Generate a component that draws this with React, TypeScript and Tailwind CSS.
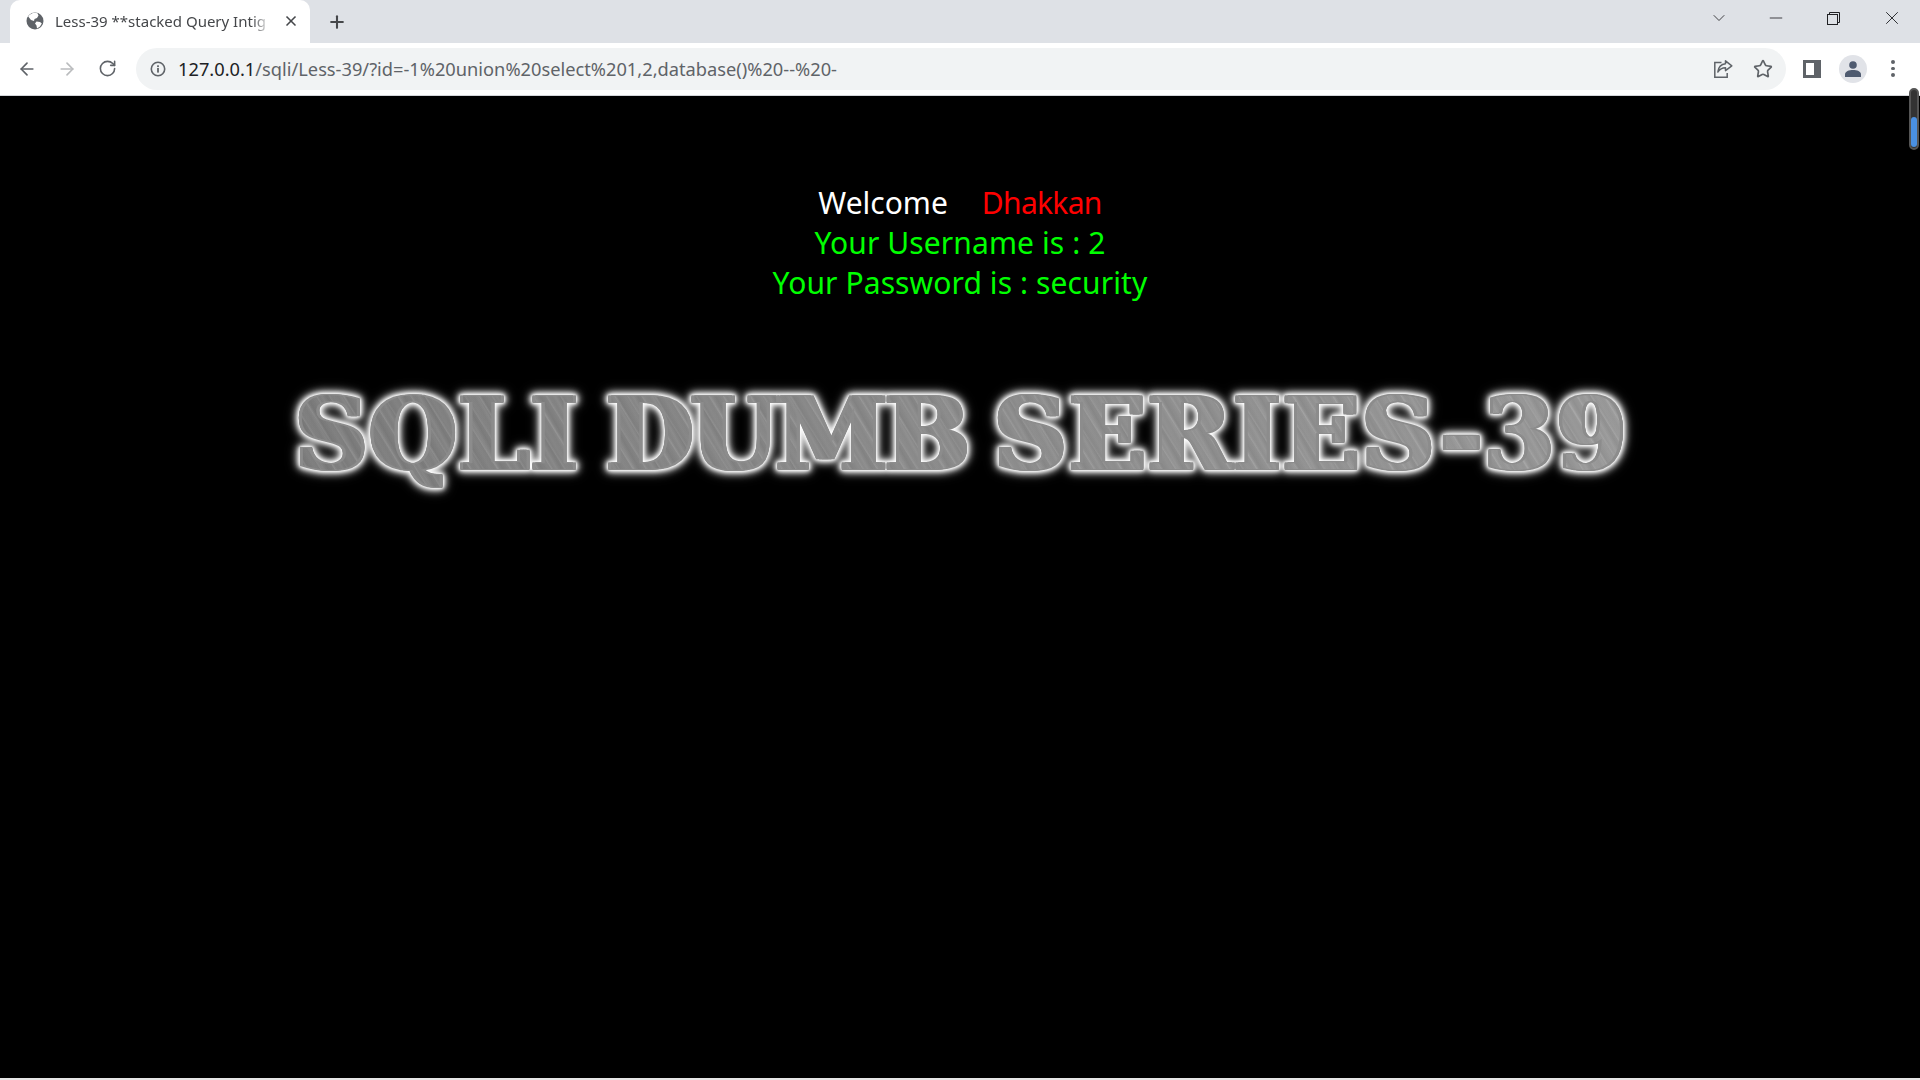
import { ArrowLeft, ArrowRight, RotateCw, Star, Plus, X, ChevronDown, Minus } from "lucide-react";

function Globe() {
  return (
    <svg width="18" height="18" viewBox="0 0 18 18" className="shrink-0">
      <circle cx="9" cy="9" r="8.5" fill="#5f6368" />
      <path d="M9 .8 C6 1 3.5 2.4 2.2 4.6 L5 8 L8 9 L8.5 7 L11 6 L12.5 3.5 L11.5 1.2Z" fill="#fff" />
      <path d="M10.5 9.5 L14 10 L15.8 11.5 L14 14.5 L11 16.4 L10.5 13.5 L9 11.5Z" fill="#fff" />
    </svg>
  );
}

function Info() {
  return (
    <svg width="16" height="16" viewBox="0 0 16 16" className="shrink-0">
      <circle cx="8" cy="8" r="6.7" fill="none" stroke="#5f6368" strokeWidth="1.6" />
      <rect x="7.1" y="7" width="1.8" height="4.6" fill="#5f6368" />
      <rect x="7.1" y="4.3" width="1.8" height="1.8" fill="#5f6368" />
    </svg>
  );
}

function Share() {
  return (
    <svg width="20" height="20" viewBox="0 0 20 20" fill="none" stroke="#5f6368" strokeWidth="1.5" className="shrink-0">
      <path d="M8.5 3.5H1.8V18.2H14.2V14" />
      <path d="M12.5 1.8 L18.8 6.8 L12.5 11.6 V8.8 C9 8.8 6.8 10 4.8 13 C5.4 8.6 8 5.2 12.5 4.8Z" strokeLinejoin="round" />
    </svg>
  );
}

function SidePanel() {
  return (
    <svg width="18" height="18" viewBox="0 0 18 18" className="shrink-0">
      <rect x="0" y="0" width="18" height="18" fill="#5f6368" />
      <rect x="3" y="3" width="8" height="12" fill="#fff" />
    </svg>
  );
}

function Avatar() {
  return (
    <div className="flex h-7 w-7 items-center justify-center rounded-full bg-[#e1e3e8]">
      <svg width="18" height="18" viewBox="0 0 18 18" className="shrink-0">
        <circle cx="9" cy="5" r="3.8" fill="#4f5b70" />
        <path d="M1 17 V14.4 C1 11.4 5 10 9 10 C13 10 17 11.4 17 14.4 V17Z" fill="#4f5b70" />
      </svg>
    </div>
  );
}

function Kebab() {
  return (
    <div className="flex flex-col gap-[3px]">
      <span className="h-[3.5px] w-[3.5px] rounded-full bg-[#5f6368]" />
      <span className="h-[3.5px] w-[3.5px] rounded-full bg-[#5f6368]" />
      <span className="h-[3.5px] w-[3.5px] rounded-full bg-[#5f6368]" />
    </div>
  );
}

function Restore() {
  return (
    <svg width="13" height="13" viewBox="0 0 13 13" fill="none" stroke="#202124" strokeWidth="1">
      <rect x="0.5" y="2.5" width="10" height="10" />
      <path d="M2.5 2.5V0.5H12.5V10.5H10.5" />
    </svg>
  );
}

export default function App() {
  return (
    <div className="relative flex h-screen w-full flex-col overflow-hidden bg-black font-['Noto_Sans',sans-serif]">
      <header className="flex h-[43px] shrink-0 items-end bg-[#dee1e6] pl-[10px]">
        <div className="flex h-[43px] w-[300px] items-center rounded-t-[10px] bg-white pb-[1px] pl-[16px]">
          <Globe />
          <span className="ml-[11px] w-[224px] shrink-0 whitespace-nowrap text-[15px] text-[#45474a] [mask-image:linear-gradient(90deg,#000_88%,transparent_96%)]">
            Less-39 **stacked Query Intig
          </span>
          <X size={16} strokeWidth={2.5} color="#45474a" className="ml-[4px] shrink-0" />
        </div>
        <Plus size={20} strokeWidth={2.5} color="#45474a" className="mb-[11px] ml-[17px] shrink-0" />
        <div className="mb-[14px] ml-auto flex items-center">
          <ChevronDown size={20} strokeWidth={1} color="#202124" />
          <Minus size={20} strokeWidth={1} color="#202124" className="ml-[37px]" />
          <span className="ml-[41px]"><Restore /></span>
          <X size={22} strokeWidth={1} color="#202124" className="ml-[41px] mr-[17px]" />
        </div>
      </header>

      <nav className="flex h-[53px] shrink-0 items-center border-b border-[#d4d6da] bg-white pl-[17px] pb-[1px]">
        <ArrowLeft size={20} strokeWidth={2} color="#5f6368" className="shrink-0" />
        <ArrowRight size={20} strokeWidth={2} color="#babcbe" className="ml-[20px] shrink-0" />
        <RotateCw size={19} strokeWidth={2} color="#5f6368" className="ml-[21px] shrink-0" />
        <div className="ml-[19px] flex h-[42px] w-[1650px] shrink-0 items-center rounded-full bg-[#f1f3f4] pl-[14px] pr-[13px]">
          <Info />
          <span className="ml-[12px] whitespace-nowrap text-[18.25px] text-[#5f6368]">
            <span className="text-[#202124]">127.0.0.1</span>/sqli/Less-39/?id=-1%20union%20select%201,2,database()%20--%20-
          </span>
          <span className="ml-auto flex items-center gap-[20px]">
            <Share />
            <Star size={20} strokeWidth={2} color="#5f6368" />
          </span>
        </div>
        <div className="ml-[17px]"><SidePanel /></div>
        <div className="ml-[18px]"><Avatar /></div>
        <div className="ml-[24px]"><Kebab /></div>
      </nav>

      <main className="flex min-h-0 flex-1 flex-col items-center bg-black pt-[87px]">
        <div className="text-[30px] leading-[40px] text-white">
          Welcome<span className="ml-[34px] tracking-[-0.7px] text-[#ff0000]">Dhakkan</span>
        </div>
        <div className="text-[30px] leading-[40px] tracking-[0.1px] text-[#00ff00]">Your Username is : 2</div>
        <div className="text-[30px] leading-[40px] tracking-[0.1px] text-[#00ff00]">Your Password is : security</div>
        <h1 className="mt-[71px] ml-[4px] whitespace-nowrap bg-[linear-gradient(90deg,rgba(0,0,0,0.1),rgba(255,255,255,0.1)),repeating-linear-gradient(58deg,transparent_0px,rgba(255,255,255,0.13)_1px,transparent_3px,transparent_11px,rgba(255,255,255,0.1)_12px,transparent_14px,transparent_23px),repeating-linear-gradient(61deg,#8c8c8c_0px,#939393_3px,#858585_7px,#8f8f8f_13px,#8c8c8c_17px)] bg-clip-text font-['DejaVu_Serif',serif] text-[100px] font-bold leading-[120px] tracking-[2px] [word-spacing:-10px] text-transparent [filter:drop-shadow(3px_0_0_#8c8c8c)_drop-shadow(-3px_0_0_#8c8c8c)_drop-shadow(0_1px_0_#8c8c8c)_drop-shadow(0_-1px_0_#8c8c8c)_drop-shadow(0_0_1px_#fff)_drop-shadow(0_0_2px_#fff)_drop-shadow(0_0_3px_#eee)_drop-shadow(0_0_4px_#aaa)]">
          SQLI <span className="tracking-[-2px]">DUMB</span> <span className="tracking-[2.6px]">SERIES-39</span>
        </h1>
      </main>
      <div className="h-[2px] shrink-0 bg-[#e6e6e6]" />

      <div className="absolute right-[1px] top-[88px] h-[62px] w-[10px] rounded-full border-2 border-[#555] bg-[#333]">
        <div className="absolute bottom-[1px] left-0 h-[30px] w-[6px] rounded-full bg-[#4a90e2]" />
      </div>
    </div>
  );
}
